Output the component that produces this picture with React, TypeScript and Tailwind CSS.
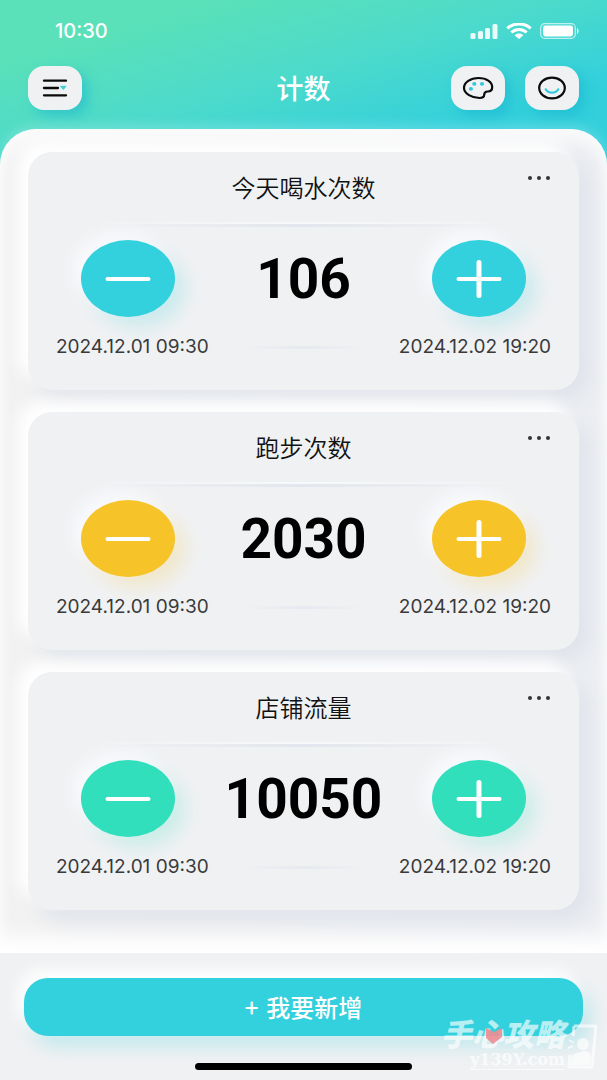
import { useState } from 'react';

interface Counter {
  id: number;
  title: string;
  count: number;
  start: string;
  end: string;
  buttonClass: string;
}

const initialCounters: Counter[] = [
  {
    id: 1,
    title: '今天喝水次数',
    count: 106,
    start: '2024.12.01 09:30',
    end: '2024.12.02 19:20',
    buttonClass: 'bg-[#33d0dd] shadow-[-8px_-8px_16px_#f8fafd,10px_10px_18px_#33d0dd33]',
  },
  {
    id: 2,
    title: '跑步次数',
    count: 2030,
    start: '2024.12.01 09:30',
    end: '2024.12.02 19:20',
    buttonClass: 'bg-[#f6c429] shadow-[-8px_-8px_16px_#f8fafd,10px_10px_18px_#f6c42933]',
  },
  {
    id: 3,
    title: '店铺流量',
    count: 10050,
    start: '2024.12.01 09:30',
    end: '2024.12.02 19:20',
    buttonClass: 'bg-[#31dfbd] shadow-[-8px_-8px_16px_#f8fafd,10px_10px_18px_#31dfbd33]',
  },
];

const toolButton =
  'flex h-11 w-[54px] items-center justify-center rounded-2xl bg-[#f0f1f3] shadow-[6px_6px_12px_#16b4cf80] cursor-pointer';

function StatusBar() {
  return (
    <div className="flex h-[62px] items-center justify-between pl-[55px] pr-7">
      <span className="font-['Inter',sans-serif] text-[20px] leading-6 font-medium">10:30</span>
      <div className="flex items-center gap-2">
        <svg width="28" height="16" viewBox="0 0 28 16" fill="#fff" fillOpacity="0.88">
          <rect x="0.5" y="10" width="5" height="6" rx="1.5" />
          <rect x="8" y="8" width="5" height="8" rx="1.5" />
          <rect x="15" y="5" width="5" height="11" rx="1.5" />
          <rect x="22.5" y="1" width="5" height="15" rx="1.5" />
        </svg>
        <svg width="26" height="16" viewBox="0 0 26 16" fill="none" stroke="#fff" strokeWidth="3">
          <path d="M1.3 5.3C8-0.6 18-0.6 24.7 5.3" />
          <path d="M5.3 9.4C9.8 5.4 16.2 5.4 20.7 9.4" />
          <path d="M8.6 12.3C11 10 15 10 17.4 12.3L13 16Z" fill="#fff" stroke="none" />
        </svg>
        <svg width="39" height="16" viewBox="0 0 39 16">
          <rect x="0.7" y="0.7" width="34.6" height="14.6" rx="4" fill="none" stroke="#fff" strokeOpacity="0.65" strokeWidth="1.2" />
          <rect x="3" y="2.6" width="30" height="10.8" rx="2.4" fill="#fff" />
          <path d="M37 5.2C39 6 39 10 37 10.8Z" fill="#fff" />
        </svg>
      </div>
    </div>
  );
}

function Header() {
  return (
    <header className="bg-[linear-gradient(164deg,#5ae1b9_18%,#4cdacb_46%,#33d0dc_74%)] pb-[62px] text-white">
      <StatusBar />
      <div className="grid grid-cols-[1fr_auto_1fr] items-center px-7 pt-1">
        <button aria-label="菜单" className={toolButton}>
          <svg width="26" height="18" viewBox="0 0 26 18" fill="none" stroke="#0b0b0b" strokeWidth="2.3" strokeLinecap="round">
            <path d="M2 1.7H24M2 9H16M2 16.3H24" />
            <path d="M19 7.3H24L21.5 10.2Z" fill="#33d0dd" stroke="#33d0dd" strokeWidth="1" strokeLinejoin="round" />
          </svg>
        </button>
        <h1 className="text-[27px] leading-8 font-medium">计数</h1>
        <div className="flex justify-end gap-5">
          <button aria-label="主题" className={toolButton}>
            <svg width="32" height="24" viewBox="0 0 32 24" fill="none" stroke="#0b0b0b" strokeWidth="2.2">
              <path d="M16.5 2C8.5 2 2 6.3 2 12C2 17.8 10 22 17.5 22C20.5 22 22.2 21 22.2 18.8C22.2 16.6 23.2 15.6 25.7 15.5C28.5 15.4 30.2 14 30.2 11.2C30.2 6 24.4 2 16.5 2Z" />
              <g fill="#33c6dc" stroke="none">
                <ellipse cx="12.3" cy="7.9" rx="2.1" ry="1.8" />
                <ellipse cx="20" cy="7.9" rx="2.1" ry="1.8" />
                <ellipse cx="8.9" cy="12.9" rx="2.1" ry="1.8" />
              </g>
            </svg>
          </button>
          <button aria-label="我的" className={toolButton}>
            <svg width="30" height="24" viewBox="0 0 30 24" fill="none" strokeWidth="2.2">
              <ellipse cx="15" cy="12" rx="12.8" ry="10.4" stroke="#0b0b0b" />
              <path d="M8.7 13.3C11.2 17.8 18.8 17.8 21.3 13.3" stroke="#33c9dc" strokeLinecap="round" />
            </svg>
          </button>
        </div>
      </div>
    </header>
  );
}

interface CounterCardProps {
  counter: Counter;
  onChange: (step: number) => void;
}

function CounterCard({ counter, onChange }: CounterCardProps) {
  const round = `flex h-[77px] w-[94px] items-center justify-center rounded-[50%] cursor-pointer ${counter.buttonClass}`;

  return (
    <article className="relative rounded-3xl bg-[#f0f1f3] pb-[31px] shadow-[-10px_-10px_16px_#ffffff,10px_10px_20px_#dfe3ea]">
      <h2 className="pt-5 text-center text-[24px] leading-[30px] font-[350] text-[#111]">{counter.title}</h2>
      <button aria-label="更多" className="absolute top-4 right-7 flex h-5 w-6 items-center justify-between cursor-pointer px-px">
        <span className="size-1 rounded-full bg-[#333]" />
        <span className="size-1 rounded-full bg-[#333]" />
        <span className="size-1 rounded-full bg-[#333]" />
      </button>

      <div className="mx-16 mt-5 h-0.5 bg-linear-to-r from-transparent via-[#f8f9fa] to-transparent" />
      <div className="mx-16 h-[3px] bg-linear-to-r from-transparent via-[#e3e6ee] to-transparent" />

      <div className="mt-[13px] flex items-center justify-between px-[53px]">
        <button aria-label="减一" className={round} onClick={() => onChange(-1)}>
          <svg width="46" height="38" viewBox="0 0 46 38" stroke="#fff" strokeWidth="4" strokeLinecap="round">
            <path d="M2.5 19H43.5" />
          </svg>
        </button>
        <output className="font-['Roboto',sans-serif] text-[55px] leading-[60px] font-bold text-black">{counter.count}</output>
        <button aria-label="加一" className={round} onClick={() => onChange(1)}>
          <svg width="46" height="38" viewBox="0 0 46 38" stroke="#fff" strokeWidth="4" strokeLinecap="round">
            <path d="M2.5 19H43.5" />
            <path d="M23 2.5V35.5" strokeWidth="5" />
          </svg>
        </button>
      </div>

      <div className="mt-[18px] flex items-center justify-between px-7 font-['Inter',sans-serif] text-[19px] leading-6 font-normal text-[#3a3a3a]">
        <time>{counter.start}</time>
        <span className="h-[3px] w-32 bg-linear-to-r from-transparent via-[#e6e9f0] to-transparent" />
        <time>{counter.end}</time>
      </div>
    </article>
  );
}

function Watermark() {
  return (
    <div className="pointer-events-none absolute right-2 bottom-2.5 flex items-end text-white/65">
      <div className="flex flex-col items-end">
        <div className="relative text-[31px] leading-9 font-black italic">
          手心攻略
          <svg className="absolute top-3 left-11" width="18" height="18" viewBox="0 0 18 18" fill="#f08c92" fillOpacity="0.9">
            <path d="M1 1L9 5L17 1V10L8 17L1 11Z" />
          </svg>
        </div>
        <span className="border-b border-white/65 font-['DejaVu_Serif',serif] text-[16px] leading-[18px] font-bold">y139Y.com</span>
      </div>
      <svg width="34" height="46" viewBox="0 0 34 46" fill="none">
        <path d="M9 2H31L27 43H4L5 31M9 2L8 12" stroke="currentColor" strokeWidth="3" strokeLinejoin="round" />
        <path d="M4 16L9 19M3 24L8 22" stroke="currentColor" strokeWidth="2" />
        <circle cx="18" cy="20" r="6" fill="currentColor" />
        <path d="M6 38C7 26 14 30 18 27C26 26 27 32 25 41H6Z" fill="currentColor" />
      </svg>
    </div>
  );
}

export default function App() {
  const [counters, setCounters] = useState(initialCounters);

  const changeCount = (id: number, step: number) => {
    setCounters((prev) => prev.map((c) => (c.id === id ? { ...c, count: c.count + step } : c)));
  };

  return (
    <div className="flex min-h-screen flex-col bg-[#f0f1f3] font-['Noto_Sans_CJK_SC',sans-serif]">
      <Header />

      <main className="-mt-[43px] flex flex-col gap-[22px] overflow-hidden rounded-t-[36px] bg-linear-to-r from-[#f2f2f2] to-[#eceef2] px-7 pt-[23px] pb-[43px] shadow-[0_-4px_12px_#ffffff33,inset_0_12px_16px_#ffffffb3,inset_0_-22px_20px_-6px_#ffffff]">
        {counters.map((counter) => (
          <CounterCard key={counter.id} counter={counter} onChange={(step) => changeCount(counter.id, step)} />
        ))}
      </main>

      <footer className="relative flex flex-col items-center px-6 pt-[25px] pb-[10px]">
        <button className="flex h-[58px] w-full items-center justify-center gap-2 rounded-3xl bg-[#33d0dd] text-[24px] leading-8 font-medium text-white cursor-pointer shadow-[-6px_-8px_16px_#ffffff,8px_10px_18px_#33d0dd40]">
          <span>+</span>
          <span>我要新增</span>
        </button>
        <div className="mt-[27px] h-[7px] w-[217px] rounded-full bg-black" />
        <Watermark />
      </footer>
    </div>
  );
}
